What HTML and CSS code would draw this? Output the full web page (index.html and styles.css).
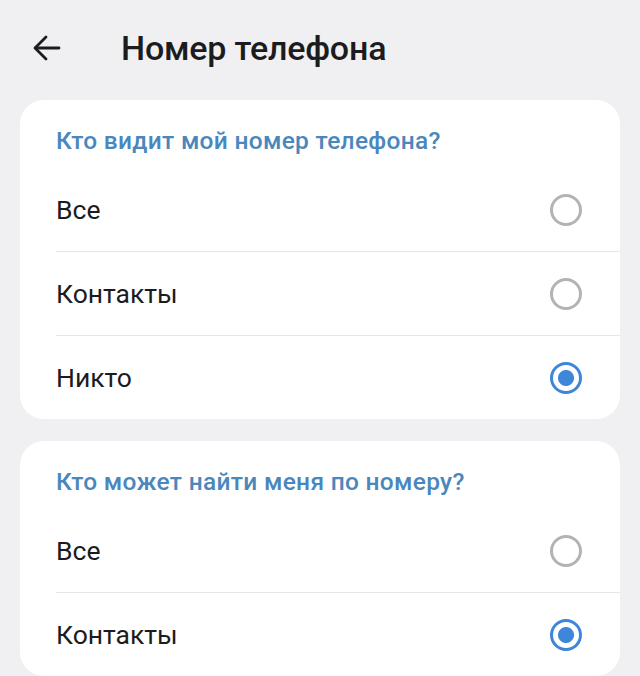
FILE: index.html
```html
<!DOCTYPE html>
<html lang="ru">
<head>
  <meta charset="UTF-8" />
  <meta name="viewport" content="width=device-width, initial-scale=1" />
  <title>Номер телефона</title>
  <link rel="stylesheet" href="styles.css">
</head>
<body>
  <div class="top-bar">
    <button class="back-btn" aria-label="Назад">
      <svg width="28" height="26" viewBox="0 0 28 26" fill="none" stroke="#1c1c1e" stroke-width="2.8" stroke-linecap="round" stroke-linejoin="round">
        <path d="M26 13H2.5" />
        <path d="M13 2L2 13l11 11" />
      </svg>
    </button>
    <h1>Номер телефона</h1>
  </div>

  <div class="card">
    <div class="card-title">Кто видит мой номер телефона?</div>
    <label class="option">
      <span>Все</span>
      <input type="radio" name="seeNumber" />
    </label>
    <label class="option">
      <span>Контакты</span>
      <input type="radio" name="seeNumber" />
    </label>
    <label class="option">
      <span>Никто</span>
      <input type="radio" name="seeNumber" checked />
    </label>
  </div>

  <div class="card">
    <div class="card-title">Кто может найти меня по номеру?</div>
    <label class="option">
      <span>Все</span>
      <input type="radio" name="findNumber" />
    </label>
    <label class="option">
      <span>Контакты</span>
      <input type="radio" name="findNumber" checked />
    </label>
  </div>
</body>
</html>
```

FILE: styles.css
```css
body {
  font-family: Roboto, "Noto Sans", sans-serif;
  background: #f0f0f2;
  margin: 0;
  padding: 0 20px;
  color: #1c1c1e;
}
.top-bar {
  display: flex;
  align-items: center;
  height: 96px;
}
.back-btn {
  background: none;
  border: none;
  padding: 0;
  margin-left: 13px;
  width: 28px;
  height: 26px;
  cursor: pointer;
}
.back-btn svg {
  display: block;
}
h1 {
  margin: 0 0 0 60px;
  font-size: 34px;
  font-weight: 500;
  letter-spacing: -0.2px;
}
.card {
  background: #fff;
  border-radius: 24px;
  margin-top: 4px;
  margin-bottom: 22px;
  padding: 26px 0 0 36px;
  overflow: hidden;
}
.card-title {
  color: #4a87bc;
  font-size: 24.5px;
  font-weight: 500;
  line-height: 30px;
  margin-bottom: 12px;
  letter-spacing: 0.3px;
}
.option {
  display: flex;
  align-items: center;
  justify-content: space-between;
  height: 83px;
  font-size: 26.5px;
  padding-right: 38px;
  border-top: 1px solid #e6e6e8;
  cursor: pointer;
}
.option:first-of-type {
  border-top: none;
}
.option input[type="radio"] {
  appearance: none;
  -webkit-appearance: none;
  margin: 0;
  width: 32px;
  height: 32px;
  border: 3px solid #b3b3b3;
  border-radius: 50%;
  box-sizing: border-box;
  cursor: pointer;
}
.option input[type="radio"]:checked {
  border: 3.5px solid #3d86d9;
  background: radial-gradient(circle, #3d86d9 0 7.5px, #fff 8.5px);
}
```
